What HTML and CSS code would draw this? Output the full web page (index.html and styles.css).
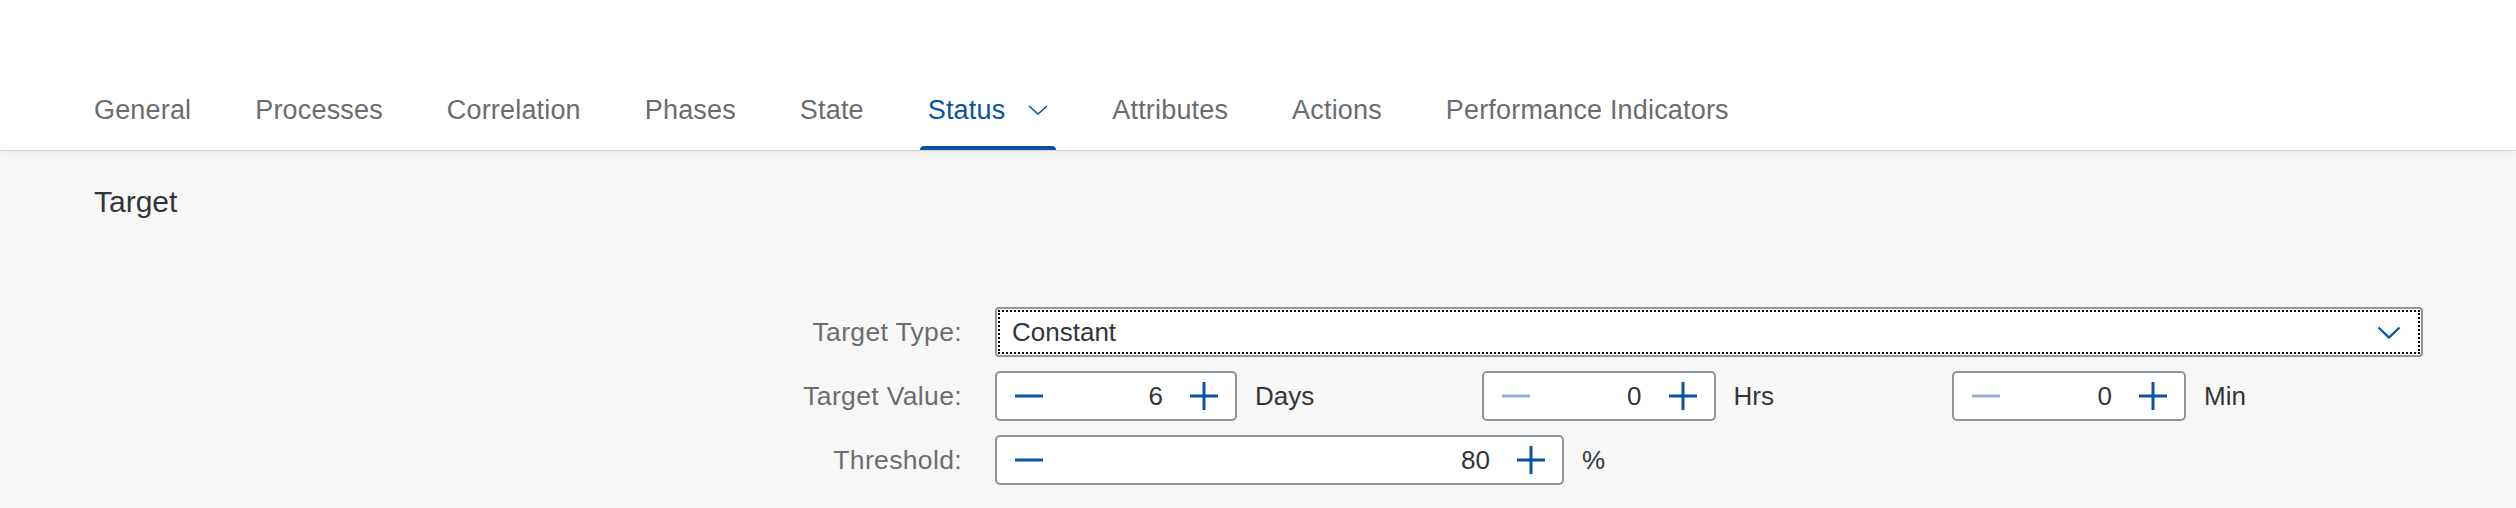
FILE: index.html
```html
<!DOCTYPE html>
<html lang="en">
<head>
<meta charset="utf-8">
<title>Status – Target</title>
<link rel="stylesheet" href="styles.css">
</head>
<body>
<header class="tabbar">
  <nav class="tabs">
    <div class="tab">General</div>
    <div class="tab">Processes</div>
    <div class="tab">Correlation</div>
    <div class="tab">Phases</div>
    <div class="tab">State</div>
    <div class="tab tab-active"><span>Status</span><svg class="tab-chev" width="20" height="10" viewBox="0 0 20 10"><polyline points="1,1 10,9 19,1" fill="none" stroke="#0854a0" stroke-width="1.6"/></svg></div>
    <div class="tab">Attributes</div>
    <div class="tab">Actions</div>
    <div class="tab">Performance Indicators</div>
  </nav>
</header>
<main class="content">
  <h2 class="section-title">Target</h2>
  <div class="form">
    <label class="label">Target Type:</label>
    <div class="select">
      <span class="select-text">Constant</span>
      <svg class="select-chev" width="24" height="13" viewBox="0 0 24 13"><polyline points="1.5,1.5 12,11.5 22.5,1.5" fill="none" stroke="#0854a0" stroke-width="2.4"/></svg>
    </div>

    <label class="label">Target Value:</label>
    <div class="value-row">
      <div class="unit-group">
        <div class="stepper stepper-half">
          <svg class="step-icon" width="28" height="28" viewBox="0 0 28 28"><path d="M0 14H28" stroke="#0854a0" stroke-width="3"/></svg>
          <span class="step-value">6</span>
          <svg class="step-icon" width="28" height="28" viewBox="0 0 28 28"><path d="M0 14H28M14 0V28" stroke="#0854a0" stroke-width="3"/></svg>
        </div>
        <span class="unit">Days</span>
      </div>
      <div class="unit-group">
        <div class="stepper stepper-half">
          <svg class="step-icon is-disabled" width="28" height="28" viewBox="0 0 28 28"><path d="M0 14H28" stroke="#0854a0" stroke-width="3"/></svg>
          <span class="step-value">0</span>
          <svg class="step-icon" width="28" height="28" viewBox="0 0 28 28"><path d="M0 14H28M14 0V28" stroke="#0854a0" stroke-width="3"/></svg>
        </div>
        <span class="unit">Hrs</span>
      </div>
      <div class="unit-group">
        <div class="stepper stepper-half">
          <svg class="step-icon is-disabled" width="28" height="28" viewBox="0 0 28 28"><path d="M0 14H28" stroke="#0854a0" stroke-width="3"/></svg>
          <span class="step-value">0</span>
          <svg class="step-icon" width="28" height="28" viewBox="0 0 28 28"><path d="M0 14H28M14 0V28" stroke="#0854a0" stroke-width="3"/></svg>
        </div>
        <span class="unit">Min</span>
      </div>
    </div>

    <label class="label">Threshold:</label>
    <div class="unit-group">
      <div class="stepper stepper-wide">
        <svg class="step-icon" width="28" height="28" viewBox="0 0 28 28"><path d="M0 14H28" stroke="#0854a0" stroke-width="3"/></svg>
        <span class="step-value">80</span>
        <svg class="step-icon" width="28" height="28" viewBox="0 0 28 28"><path d="M0 14H28M14 0V28" stroke="#0854a0" stroke-width="3"/></svg>
      </div>
      <span class="unit">%</span>
    </div>
  </div>
</main>
</body>
</html>
```

FILE: styles.css
```css
html, body {
  margin: 0;
  padding: 0;
  background: #f7f7f7;
  min-height: 100vh;
  font-family: "Liberation Sans", Arial, sans-serif;
  color: #32363a;
}

.tabbar {
  position: relative;
  z-index: 1;
  height: 150px;
  background: #ffffff;
  box-shadow: 0 1px 0 #d6d6d6, 0 2px 10px rgba(0, 0, 0, 0.07);
}

.tabs {
  display: flex;
  align-items: flex-end;
  height: 100%;
  padding-left: 62px;
  box-sizing: border-box;
}

.tab {
  position: relative;
  display: flex;
  align-items: center;
  margin: 0 24px;
  padding: 0 8px 22px;
  font-size: 27px;
  letter-spacing: 0.17px;
  line-height: 36px;
  color: #6a6d70;
  white-space: nowrap;
}

.tab-active {
  color: #0854a0;
}

.tab-active::after {
  content: "";
  position: absolute;
  left: 0;
  right: 0;
  bottom: 0;
  height: 4px;
  border-radius: 4px 4px 0 0;
  background: #0854a0;
}

.tab-chev {
  margin-left: 23px;
  display: block;
}

.content {
  padding: 34px 93px 0 94px;
}

.section-title {
  margin: 0;
  font-size: 30px;
  line-height: 36px;
  font-weight: normal;
  color: #32363a;
}

.form {
  margin-top: 87px;
  display: grid;
  grid-template-columns: 868px 1fr;
  grid-auto-rows: 50px;
  column-gap: 33px;
  row-gap: 14px;
}

.label {
  align-self: center;
  text-align: right;
  font-size: 26.5px;
  letter-spacing: 0.35px;
  color: #6a6d70;
  white-space: nowrap;
}

.select {
  position: relative;
  display: flex;
  align-items: center;
  justify-content: space-between;
  box-sizing: border-box;
  height: 50px;
  padding: 0 20px 0 15px;
  background: #ffffff;
  border: 2px solid #8d949c;
  border-radius: 4px;
  outline: 2px dotted #000000;
  outline-offset: -5px;
}

.select-text {
  font-size: 26px;
  color: #32363a;
}

.select-chev {
  display: block;
}

.value-row {
  display: grid;
  grid-template-columns: 487px 470px 1fr;
}

.unit-group {
  display: flex;
  align-items: center;
  height: 50px;
}

.stepper {
  display: flex;
  align-items: center;
  box-sizing: border-box;
  height: 50px;
  padding: 0 17px 0 18px;
  background: #ffffff;
  border: 2px solid #8d949c;
  border-radius: 5px;
}

.stepper-half {
  width: 49.7%;
}

.stepper-wide {
  width: 569px;
}

.step-icon {
  display: block;
  flex: none;
}

.step-icon.is-disabled {
  opacity: 0.45;
}

.step-value {
  flex: 1;
  text-align: right;
  margin-right: 27px;
  font-size: 26px;
  color: #32363a;
}

.unit {
  margin-left: 18px;
  font-size: 26px;
  color: #32363a;
}
```
